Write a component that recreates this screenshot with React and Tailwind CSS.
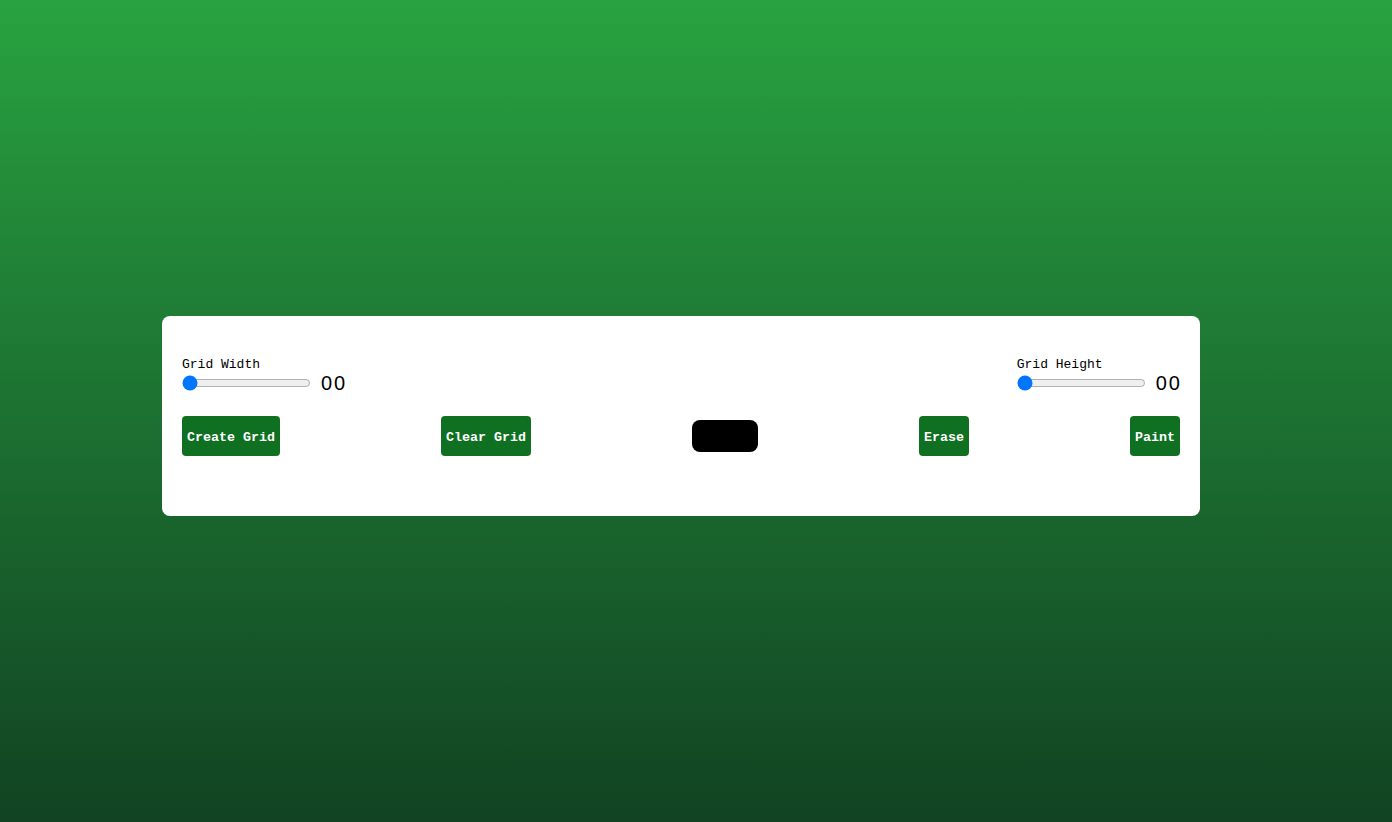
import React from "react";

function Slider({ label }) {
  return (
    <div className="flex flex-col">
      <label className="text-[13px] leading-[14px] text-black pt-[1px]" style={{ fontFamily: '"Liberation Mono", monospace' }}>
        {label}
      </label>
      <div className="flex items-center mt-[1px]">
        <input type="range" min="0" max="50" defaultValue="0" className="w-[129px] h-[16px] m-0" />
        <span className="ml-[10px] mr-[-2px] text-[20px] leading-[20px] tracking-[2px] text-black" style={{ fontFamily: '"Liberation Sans", Arial, sans-serif' }}>
          00
        </span>
      </div>
    </div>
  );
}

function Btn({ children }) {
  return (
    <button
      className="h-[40px] px-[5px] pt-[3px] rounded-[4px] bg-[#0e7020] text-white text-[13.33px] font-bold"
      style={{ fontFamily: '"Liberation Mono", monospace' }}
    >
      {children}
    </button>
  );
}

export default function App() {
  return (
    <div className="w-full h-[822px] bg-gradient-to-b from-[#28a340] to-[#114322] pt-[316px] pl-[162px]">
      <div className="w-[1038px] h-[200px] bg-white rounded-[8px] px-[20px] pt-[41px]">
        <div className="flex justify-between items-start">
          <Slider label="Grid Width" />
          <Slider label="Grid Height" />
        </div>
        <div className="flex justify-between items-center mt-[23px]">
          <Btn>Create Grid</Btn>
          <Btn>Clear Grid</Btn>
          <div className="w-[66px] h-[32px] bg-black rounded-[8px]" />
          <Btn>Erase</Btn>
          <Btn>Paint</Btn>
        </div>
      </div>
    </div>
  );
}
